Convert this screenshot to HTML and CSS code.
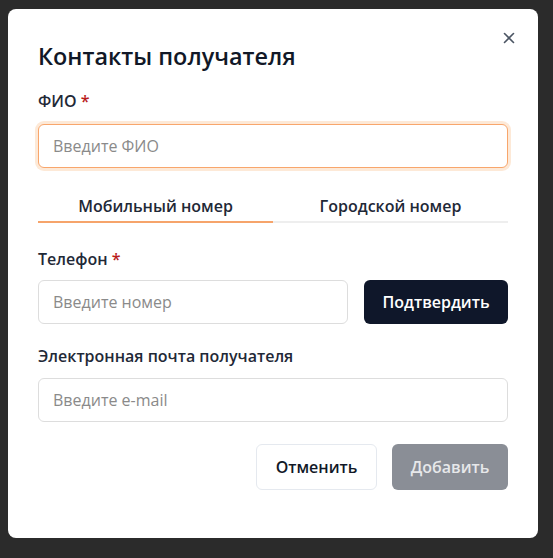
FILE: index.html
```html
<!DOCTYPE html>
<html lang="ru">
<head>
<meta charset="utf-8">
<link rel="stylesheet" href="styles.css">
</head>
<body>
<div class="modal">
  <button class="close" aria-label="Закрыть">
    <svg width="12" height="12" viewBox="0 0 12 12"><path d="M1.5 1.5 L10.5 10.5 M10.5 1.5 L1.5 10.5" stroke="#4b5563" stroke-width="1.6" stroke-linecap="round"/></svg>
  </button>
  <h1 class="title">Контакты получателя</h1>

  <label class="label">ФИО <span class="req">*</span></label>
  <div class="input focus">Введите ФИО</div>

  <div class="tabs">
    <div class="tab active">Мобильный номер</div>
    <div class="tab">Городской номер</div>
  </div>

  <label class="label label-phone">Телефон <span class="req">*</span></label>
  <div class="phone-row">
    <div class="input">Введите номер</div>
    <button class="btn btn-dark">Подтвердить</button>
  </div>

  <label class="label label-email">Электронная почта получателя</label>
  <div class="input">Введите e-mail</div>

  <div class="footer">
    <button class="btn btn-light">Отменить</button>
    <button class="btn btn-disabled">Добавить</button>
  </div>
</div>
</body>
</html>
```
FILE: styles.css
```css
* { box-sizing: border-box; }
html, body { margin: 0; padding: 0; }
body {
  width: 553px;
  height: 558px;
  background: #2b2b2b;
  font-family: "Open Sans", "Noto Sans", sans-serif;
  padding: 9px 15px 0 8px;
  overflow: hidden;
}
.modal {
  position: relative;
  width: 530px;
  height: 529px;
  background: #ffffff;
  border-radius: 8px;
  padding: 32px 30px 0 30px;
}
.close {
  position: absolute;
  top: 23px;
  right: 23px;
  width: 12px;
  height: 12px;
  padding: 0;
  border: 0;
  background: none;
  display: flex;
}
.title {
  margin: 0;
  font-size: 23.4px;
  line-height: 30px;
  font-weight: 600;
  color: #111827;
}
.label {
  display: block;
  font-size: 16px;
  line-height: 22px;
  font-weight: 600;
  color: #1f2937;
  margin: 19px 0 12px;
}
.req { color: #b91c1c; }
.label-phone { margin-top: 25px; margin-bottom: 10px; }
.label-email { margin-top: 21px; margin-bottom: 11px; }
.input {
  height: 44px;
  border: 1px solid #dddddd;
  border-radius: 6px;
  padding: 0 14px;
  display: flex;
  align-items: center;
  font-size: 16px;
  color: #8a8a8a;
  background: #fff;
}
.input.focus {
  border-color: #f8a66c;
  box-shadow: 0 0 0 3px #fde9d7;
}
.tabs {
  display: flex;
  margin-top: 22px;
}
.tab {
  flex: 1;
  text-align: center;
  font-size: 16px;
  line-height: 22px;
  font-weight: 600;
  color: #1f2937;
  padding: 5px 0 4px;
  border-bottom: 2px solid #eeeeee;
}
.tab.active { border-bottom-color: #f6a46b; }
.phone-row {
  display: flex;
  gap: 16px;
}
.phone-row .input { flex: 1; }
.btn {
  font-family: inherit;
  font-size: 16px;
  font-weight: 600;
  border-radius: 6px;
  height: 45px;
  padding: 0;
}
.btn-dark {
  width: 144px;
  height: 44px;
  background: #0f172a;
  color: #ffffff;
  border: 0;
}
.footer {
  display: flex;
  justify-content: flex-end;
  gap: 15px;
  margin-top: 22px;
}
.btn-light {
  width: 121px;
  height: 46px;
  background: #fff;
  border: 1px solid #e5e9ef;
  color: #111827;
}
.btn-disabled {
  width: 116px;
  height: 46px;
  background: #8a8e96;
  border: 0;
  color: #e7e8ea;
}
```
